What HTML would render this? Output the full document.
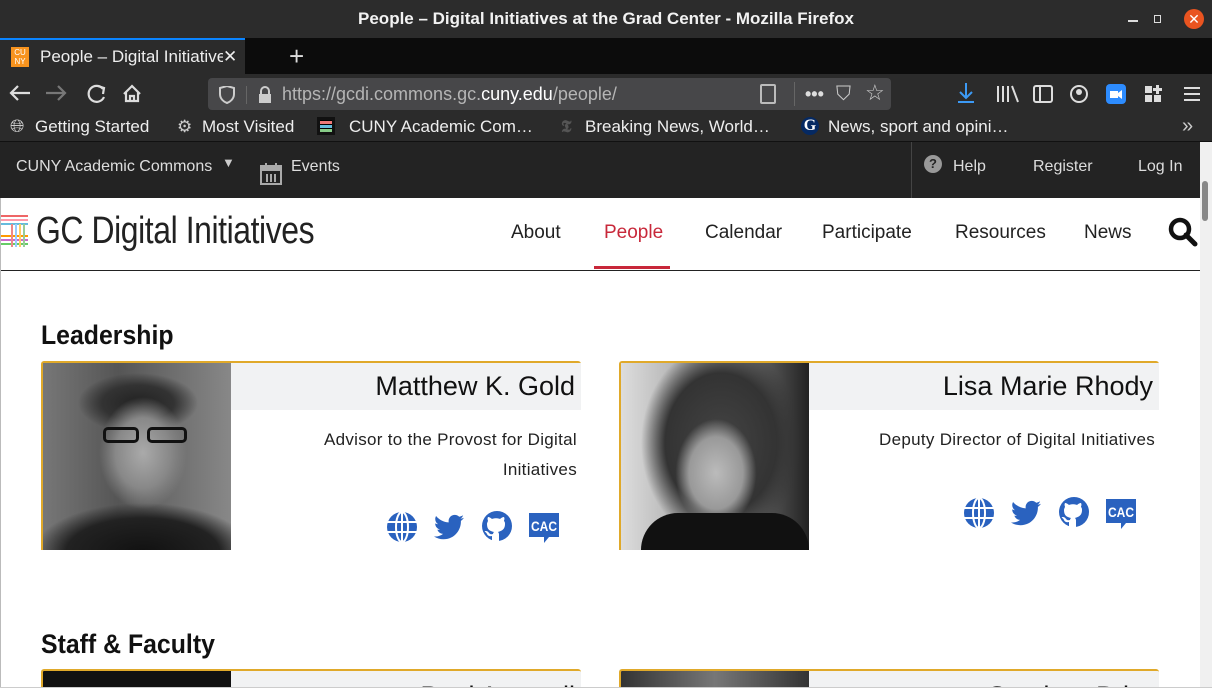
<!DOCTYPE html>
<html><head><meta charset="utf-8"><style>
*{margin:0;padding:0;box-sizing:border-box}
html,body{width:1212px;height:688px;overflow:hidden}
body{position:relative;font-family:"Liberation Sans",sans-serif;background:#fff}
.a{position:absolute}
.tb{left:0;top:0;width:1212px;height:38px;background:#2c2c2c;color:#f2f2f2;font-weight:bold;font-size:17px;text-align:center;line-height:38px}
.tabs{left:0;top:38px;width:1212px;height:36px;background:#0c0c0c}
.tab{left:0;top:38px;width:282px;height:36px;background:#2b2b2b;border-top:2px solid #0a84ff;color:#eee;font-size:17px;line-height:34px}
.nav{left:0;top:74px;width:1212px;height:37px;background:#2b2b2b}
.url{left:208px;top:78px;width:683px;height:32px;background:#474749;border-radius:4px;color:#b5b5b5;font-size:18px;line-height:32px}
.bm{left:0;top:111px;width:1212px;height:31px;background:#2b2b2b;color:#eee;font-size:17px;line-height:31px;border-bottom:1px solid #111}
.adm{left:0;top:142px;width:1200px;height:56px;background:#232323;color:#ddd;font-size:16px}
.hdr{left:1px;top:198px;width:1199px;height:73px;background:#fff;border-bottom:1px solid #222}
.menu{top:222px;font-size:19px;color:#222}
.card{border-top:2px solid #e0a92a;border-left:2px solid #e0a92a;border-radius:3px 3px 0 0;background:#fff}
.band{background:#f1f2f3;height:47px;text-align:right;padding-right:6px;font-size:27px;color:#111;line-height:46px}
.role{text-align:right;font-size:17px;color:#222;line-height:30px;letter-spacing:0.3px}
h2{position:absolute;font-size:27px;font-weight:bold;color:#111;transform:scaleX(0.92);transform-origin:left}
.ic{fill:#2a62bf}
</style></head><body>
<div class="a tb">People – Digital Initiatives at the Grad Center - Mozilla Firefox</div>
<div class="a" style="left:1128px;top:20px;width:10px;height:2px;background:#ddd"></div>
<div class="a" style="left:1154px;top:15px;width:7px;height:8px;border:1px solid #ddd"></div>
<div class="a" style="left:1184px;top:9px;width:20px;height:20px;border-radius:50%;background:#e95420;color:#fff;font-size:14px;text-align:center;line-height:20px">✕</div>
<div class="a tabs"></div>
<div class="a tab" style="width:245px"><span style="position:absolute;left:11px;top:7px;width:18px;height:20px;background:#f7931e;color:#fff;font-size:8px;line-height:9px;text-align:center;padding-top:1px">CU<br>NY</span><span style="position:absolute;left:40px;top:0;width:205px;white-space:nowrap;overflow:hidden">People – Digital Initiative <span style="position:absolute;left:183px;top:0;background:#2b2b2b;width:22px">✕</span></span></div>
<div class="a" style="left:289px;top:40px;color:#ddd;font-size:26px;line-height:32px">+</div>
<div class="a nav"></div>
<svg class="a" style="left:0;top:74px" width="200" height="37"><g stroke="#ddd" stroke-width="2.2" fill="none"><path d="M11 19h19M18 12l-7 7 7 7"/><path d="M46 19h19M58 12l7 7-7 7" stroke="#777"/><path d="M103 15a8 8 0 1 0 1 8"/><path d="M98 12l6 2-1 6" /><path d="M124 20l8-8 8 8M126 18v9h12v-9M130 27v-5h4v5"/></g></svg>
<div class="a url"><svg style="position:absolute;left:10px;top:8px" width="56" height="18"><path d="M2 2l7-2 7 2v6c0 5-4 8-7 9-3-1-7-4-7-9z" fill="none" stroke="#ccc" stroke-width="2"/><rect x="28" y="0" width="1" height="18" fill="#666"/><rect x="41" y="8" width="12" height="9" fill="#ccc"/><path d="M43 8v-3a4 4 0 0 1 8 0v3" stroke="#ccc" stroke-width="2" fill="none"/></svg><span style="position:absolute;left:74px">https://gcdi.commons.gc.<span style="color:#fff">cuny.edu</span>/people/</span>
<span style="position:absolute;left:552px;top:6px;width:16px;height:20px;border:2px solid #bbb;border-radius:2px"></span>
<span style="position:absolute;left:586px;top:4px;width:1px;height:24px;background:#666"></span>
<span style="position:absolute;left:597px;color:#ddd;font-weight:bold">•••</span><span style="position:absolute;left:628px;top:0;color:#ccc;font-size:20px">⛉</span><span style="position:absolute;left:657px;top:-1px;color:#ccc;font-size:22px">☆</span></div>
<svg class="a" style="left:950px;top:80px" width="260" height="28"><g stroke="#ddd" stroke-width="2" fill="none"><path d="M16 3v15M10 12l6 6 6-6M8 22h16" stroke="#3c9af5"/><path d="M48 6v16M53 6v16M58 6v16M62 6l6 16"/><rect x="84" y="6" width="18" height="16" rx="2"/><path d="M90 6v16"/><circle cx="129" cy="14" r="8"/></g><circle cx="129" cy="12" r="3" fill="#ddd"/><rect x="156" y="4" width="20" height="20" rx="4" fill="#2d8cff"/><path d="M160 11h8v7h-8zM168 13l4-3v9l-4-3z" fill="#fff"/><g fill="#ddd"><rect x="195" y="6" width="7" height="7"/><rect x="195" y="15" width="7" height="7"/><rect x="204" y="15" width="7" height="7"/><path d="M206 5h3v3h3v3h-3v3h-3v-3h-3v-3h3z"/><rect x="234" y="7" width="16" height="2"/><rect x="234" y="13" width="16" height="2"/><rect x="234" y="19" width="16" height="2"/></g></svg>
<div class="a bm"><span style="position:absolute;left:10px;font-size:18px;color:#ccc">🌐︎</span><span style="position:absolute;left:35px">Getting Started</span><span style="position:absolute;left:177px;color:#ccc">⚙</span><span style="position:absolute;left:202px">Most Visited</span><span style="position:absolute;left:317px;top:6px;width:18px;height:18px;background:#000;border:3px solid #111"><span style="display:block;height:3px;background:#e77;margin-top:1px"></span><span style="display:block;height:3px;background:#6bd;margin-top:1px"></span><span style="display:block;height:3px;background:#8c8;margin-top:1px"></span></span><span style="position:absolute;left:349px">CUNY Academic Com…</span><span style="position:absolute;left:561px;color:#555;font-family:'Liberation Serif';font-weight:bold">𝕿</span><span style="position:absolute;left:585px">Breaking News, World…</span><span style="position:absolute;left:801px;top:6px;width:18px;height:18px;border-radius:50%;background:#052962;color:#fff;font-family:'Liberation Serif';font-weight:bold;font-size:16px;line-height:18px;text-align:center">G</span><span style="position:absolute;left:828px">News, sport and opini…</span><span style="position:absolute;left:1182px;font-size:20px;color:#ccc">»</span></div>
<div class="a adm"><span style="position:absolute;left:16px;top:16px">CUNY Academic Commons</span><span style="position:absolute;left:222px;top:13px;font-size:13px;color:#ccc">▼</span>
<svg style="position:absolute;left:260px;top:20px" width="22" height="24"><rect x="1" y="4" width="20" height="18" fill="none" stroke="#aaa" stroke-width="2"/><rect x="1" y="4" width="20" height="5" fill="#aaa"/><path d="M6 1v6M16 1v6M7 12v8M11 12v8M15 12v8" stroke="#aaa" stroke-width="2"/></svg>
<span style="position:absolute;left:291px;top:16px">Events</span>
<span style="position:absolute;left:911px;top:0;width:1px;height:56px;background:#444"></span>
<span style="position:absolute;left:924px;top:13px;width:18px;height:18px;border-radius:50%;background:#999;color:#232323;font-weight:bold;font-size:13px;text-align:center;line-height:18px">?</span>
<span style="position:absolute;left:953px;top:16px">Help</span><span style="position:absolute;left:1033px;top:16px">Register</span><span style="position:absolute;left:1138px;top:16px">Log In</span></div>
<div class="a" style="left:1200px;top:142px;width:12px;height:546px;background:#f0f0f0"></div>
<div class="a" style="left:1202px;top:181px;width:6px;height:40px;background:#888;border-radius:3px"></div>
<div class="a" style="left:0;top:198px;width:1px;height:490px;background:#bbb"></div>
<div class="a hdr"></div>
<svg class="a" style="left:1px;top:214px" width="28" height="34"><g stroke-width="2"><path d="M0 2h27" stroke="#e66"/><path d="M0 6h27" stroke="#f9a"/><path d="M0 10h27" stroke="#6bd"/><path d="M0 22h27" stroke="#f90"/><path d="M0 26h27" stroke="#c6c"/><path d="M0 30h27" stroke="#6c6"/><path d="M11 10v23" stroke="#e88"/><path d="M15 10v23" stroke="#9cf"/><path d="M19 10v23" stroke="#fc6"/><path d="M23 10v23" stroke="#9c9"/></g></svg>
<div class="a" style="left:36px;top:210px;font-size:38px;color:#222;transform:scaleX(0.84);transform-origin:left;letter-spacing:-0.5px">GC Digital Initiatives</div>
<div class="a menu" style="left:511px">About</div>
<div class="a menu" style="left:604px;color:#c8283a">People</div>
<div class="a" style="left:594px;top:266px;width:76px;height:3px;background:#c8283a"></div>
<div class="a menu" style="left:705px">Calendar</div>
<div class="a menu" style="left:822px">Participate</div>
<div class="a menu" style="left:955px">Resources</div>
<div class="a menu" style="left:1084px">News</div>
<svg class="a" style="left:1167px;top:216px" width="32" height="32"><circle cx="13" cy="13" r="9" fill="none" stroke="#111" stroke-width="4.5"/><path d="M19 19l9 9" stroke="#111" stroke-width="5" stroke-linecap="round"/></svg>

<h2 style="left:41px;top:320px">Leadership</h2>
<div class="a card" style="left:41px;top:361px;width:540px;height:189px">
<div class="a" style="left:0;top:0;width:188px;height:187px;background:radial-gradient(ellipse 55px 70px at 100px 90px,#aaa 0,#888 50%,transparent 80%),radial-gradient(ellipse 60px 30px at 95px 40px,#222 0,#333 60%,transparent 100%),radial-gradient(ellipse 110px 50px at 100px 190px,#111 0,#222 70%,transparent 100%),linear-gradient(90deg,#777,#555 40%,#888)"></div>
<div class="a" style="left:60px;top:64px;width:36px;height:16px;border:3px solid #111;border-radius:5px"></div>
<div class="a" style="left:104px;top:64px;width:40px;height:16px;border:3px solid #111;border-radius:5px"></div>
<div class="a band" style="left:188px;top:0;width:350px">Matthew K. Gold</div>
<div class="a role" style="left:188px;top:62px;width:346px">Advisor to the Provost for Digital<br>Initiatives</div>
</div>
<div class="a card" style="left:619px;top:361px;width:540px;height:189px">
<div class="a" style="left:0;top:0;width:188px;height:187px;background:radial-gradient(ellipse 45px 60px at 95px 110px,#bbb 0,#999 60%,transparent 90%),radial-gradient(ellipse 80px 100px at 100px 80px,#444 0,#333 70%,transparent 100%),linear-gradient(90deg,#ddd,#999 50%,#222)"></div>
<div class="a" style="left:20px;top:150px;width:168px;height:37px;background:#111;border-radius:40px 40px 0 0"></div>
<div class="a band" style="left:188px;top:0;width:350px">Lisa Marie Rhody</div>
<div class="a role" style="left:188px;top:62px;width:346px">Deputy Director of Digital Initiatives</div>
</div>

<svg class="a" style="left:384px;top:510px" width="180" height="36"><g class="ic">
<circle cx="18" cy="17" r="15"/><g stroke="#fff" stroke-width="2" fill="none"><ellipse cx="18" cy="17" rx="6" ry="15"/><path d="M3 12h30M3 22h30M18 2v30"/></g>
<svg x="49" y="2" width="32" height="30" viewBox="0 0 512 512"><path d="M459 152c.3 4.5.3 9 .3 13.6 0 138.7-105.6 298.6-298.6 298.6-59.5 0-114.7-17.2-161.1-47.1 8.4 1 16.6 1.3 25.3 1.3 49.1 0 94.2-16.6 130.3-44.8-46.1-1-84.8-31.2-98.1-72.8 6.5 1 13 1.6 19.8 1.6 9.4 0 18.8-1.3 27.6-3.6-48.1-9.7-84.1-52-84.1-103v-1.300c14 7.8 30.2 12.7 47.4 13.3-28.3-18.8-46.8-51-46.8-87.4 0-19.5 5.2-37.4 14.3-53 51.7 63.7 129.3 105.3 216.4 109.8-1.6-7.8-2.6-15.9-2.6-24 0-57.8 46.8-104.9 104.9-104.9 30.2 0 57.5 12.7 76.7 33.1 23.7-4.5 46.5-13.3 66.6-25.3-7.8 24.4-24.4 44.8-46.1 57.8 21.1-2.3 41.6-8.1 60.4-16.2-14.3 20.8-32.2 39.3-52.6 54.3z" fill="#2a62bf"/></svg>
<circle cx="113" cy="16" r="15"/><path d="M108 31v-5c-4 1-5-2-5-2-1-2-2-2-2-2 -1-1 1-1 1-1 2 0 3 2 3 2 2 2 3 1 4 1 0-1 1-2 1-2-4-1-7-2-7-8 0-1 1-3 1-3 0-1-1-2 0-4 0 0 2 0 4 2 2-1 6-1 8 0 2-2 4-2 4-2 1 2 0 3 0 4 1 1 1 2 1 3 0 6-4 7-7 8 1 1 1 2 1 3v6z" fill="#fff"/>
<path d="M145 3h30v24h-10l-5 6v-6h-15z"/><text x="160" y="21" fill="#fff" font-family="Liberation Sans,sans-serif" font-weight="bold" font-size="14" text-anchor="middle" textLength="26" lengthAdjust="spacingAndGlyphs">CAC</text>
</g></svg>
<svg class="a" style="left:961px;top:496px" width="180" height="36"><g class="ic">
<circle cx="18" cy="17" r="15"/><g stroke="#fff" stroke-width="2" fill="none"><ellipse cx="18" cy="17" rx="6" ry="15"/><path d="M3 12h30M3 22h30M18 2v30"/></g>
<svg x="49" y="2" width="32" height="30" viewBox="0 0 512 512"><path d="M459 152c.3 4.5.3 9 .3 13.6 0 138.7-105.6 298.6-298.6 298.6-59.5 0-114.7-17.2-161.1-47.1 8.4 1 16.6 1.3 25.3 1.3 49.1 0 94.2-16.6 130.3-44.8-46.1-1-84.8-31.2-98.1-72.8 6.5 1 13 1.6 19.8 1.6 9.4 0 18.8-1.3 27.6-3.6-48.1-9.7-84.1-52-84.1-103v-1.3c14 7.8 30.2 12.7 47.4 13.3-28.3-18.8-46.8-51-46.8-87.4 0-19.5 5.2-37.4 14.3-53 51.7 63.7 129.3 105.3 216.4 109.8-1.6-7.8-2.6-15.9-2.6-24 0-57.8 46.8-104.9 104.9-104.9 30.2 0 57.5 12.7 76.7 33.1 23.7-4.5 46.5-13.3 66.6-25.3-7.8 24.4-24.4 44.8-46.1 57.8 21.1-2.3 41.6-8.1 60.4-16.2-14.3 20.8-32.2 39.3-52.6 54.3z" fill="#2a62bf"/></svg>
<circle cx="113" cy="16" r="15"/><path d="M108 31v-5c-4 1-5-2-5-2-1-2-2-2-2-2 -1-1 1-1 1-1 2 0 3 2 3 2 2 2 3 1 4 1 0-1 1-2 1-2-4-1-7-2-7-8 0-1 1-3 1-3 0-1-1-2 0-4 0 0 2 0 4 2 2-1 6-1 8 0 2-2 4-2 4-2 1 2 0 3 0 4 1 1 1 2 1 3 0 6-4 7-7 8 1 1 1 2 1 3v6z" fill="#fff"/>
<path d="M145 3h30v24h-10l-5 6v-6h-15z"/><text x="160" y="21" fill="#fff" font-family="Liberation Sans,sans-serif" font-weight="bold" font-size="14" text-anchor="middle" textLength="26" lengthAdjust="spacingAndGlyphs">CAC</text>
</g></svg>

<h2 style="left:41px;top:629px">Staff &amp; Faculty</h2>
<div class="a card" style="left:41px;top:669px;width:540px;height:40px;overflow:hidden">
<div class="a" style="left:0;top:0;width:188px;height:40px;background:#111"></div>
<div class="a band" style="left:188px;top:0;width:350px;line-height:50px">Paul Attewell</div></div>
<div class="a card" style="left:619px;top:669px;width:540px;height:40px;overflow:hidden">
<div class="a" style="left:0;top:0;width:188px;height:40px;background:linear-gradient(90deg,#333,#777 50%,#333)"></div>
<div class="a band" style="left:188px;top:0;width:350px;line-height:50px">Stephen Brier</div></div>
<div class="a" style="left:0;top:687px;width:1212px;height:1px;background:#ccc"></div>
</body></html>
